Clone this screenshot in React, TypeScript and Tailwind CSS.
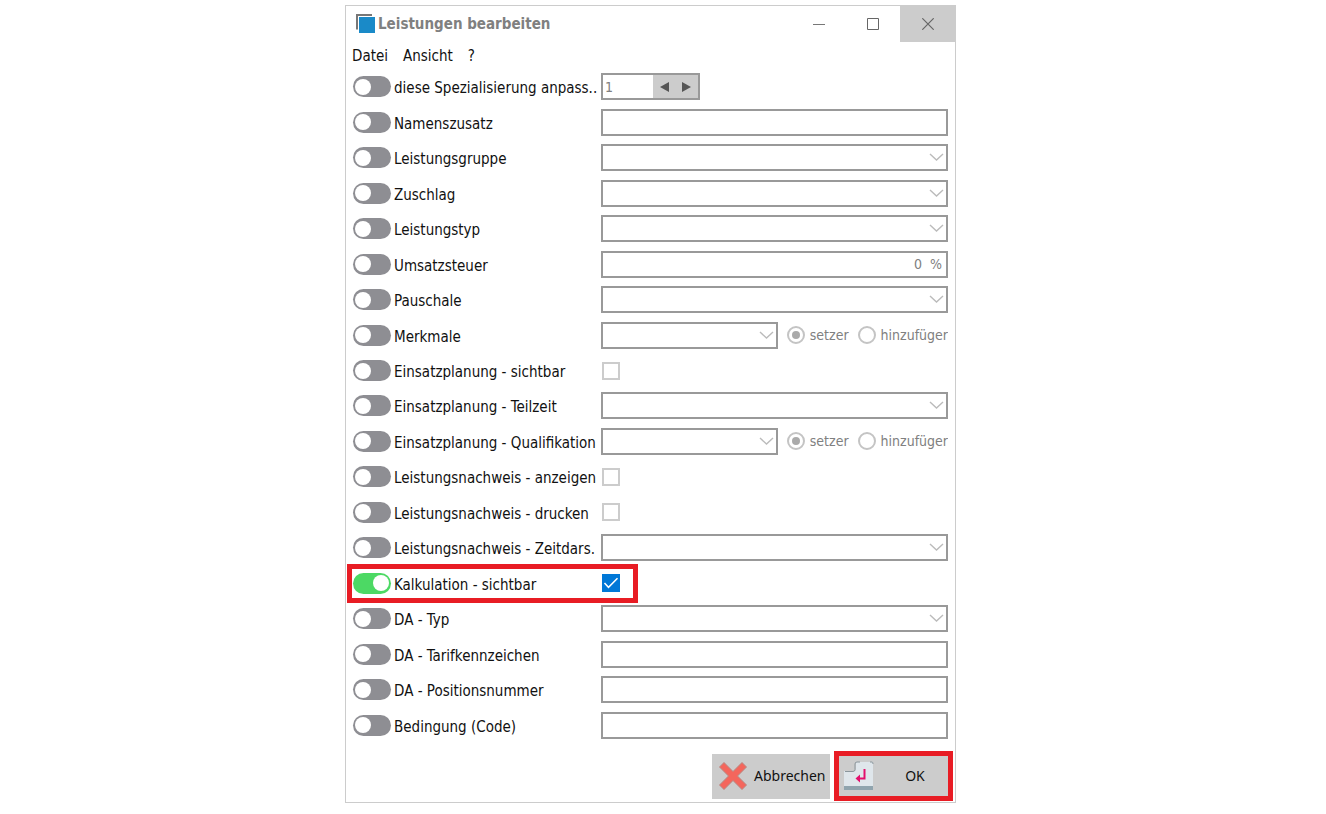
import React, { useState } from "react";

type FieldKind = "spinner" | "text" | "select" | "percent" | "selectWithMode" | "checkbox";

interface FieldRow {
  id: string;
  label: string;
  kind: FieldKind;
  active?: boolean;
}

const ROWS: FieldRow[] = [
  { id: "spezialisierung", label: "diese Spezialisierung anpass..", kind: "spinner" },
  { id: "namenszusatz", label: "Namenszusatz", kind: "text" },
  { id: "leistungsgruppe", label: "Leistungsgruppe", kind: "select" },
  { id: "zuschlag", label: "Zuschlag", kind: "select" },
  { id: "leistungstyp", label: "Leistungstyp", kind: "select" },
  { id: "umsatzsteuer", label: "Umsatzsteuer", kind: "percent" },
  { id: "pauschale", label: "Pauschale", kind: "select" },
  { id: "merkmale", label: "Merkmale", kind: "selectWithMode" },
  { id: "ep-sichtbar", label: "Einsatzplanung - sichtbar", kind: "checkbox" },
  { id: "ep-teilzeit", label: "Einsatzplanung - Teilzeit", kind: "select" },
  { id: "ep-qualifikation", label: "Einsatzplanung - Qualifikation", kind: "selectWithMode" },
  { id: "ln-anzeigen", label: "Leistungsnachweis - anzeigen", kind: "checkbox" },
  { id: "ln-drucken", label: "Leistungsnachweis - drucken", kind: "checkbox" },
  { id: "ln-zeitdars", label: "Leistungsnachweis - Zeitdars.", kind: "select" },
  { id: "kalkulation", label: "Kalkulation - sichtbar", kind: "checkbox", active: true },
  { id: "da-typ", label: "DA - Typ", kind: "select" },
  { id: "da-tarif", label: "DA - Tarifkennzeichen", kind: "text" },
  { id: "da-position", label: "DA - Positionsnummer", kind: "text" },
  { id: "bedingung", label: "Bedingung (Code)", kind: "text" },
];

const box = "h-[27px] w-full border-2 border-[#999] bg-white text-[#808080] outline-none";

interface FieldProps {
  id: string;
  label: string;
  enabled: boolean;
}

const SelectField = ({ id, label, enabled }: FieldProps) => (
  <div className="relative min-w-0 flex-1">
    <select id={id} aria-label={label} disabled={!enabled} className={`${box} block appearance-none opacity-100`}>
      <option value=""></option>
    </select>
    <svg
      className="pointer-events-none absolute top-[9px] right-[4px] h-[8px] w-[15px] text-[#bbb]"
      viewBox="0 0 15 8"
      fill="none"
      stroke="currentColor"
      strokeWidth="1.4"
    >
      <path d="M1 1l6.5 6L14 1" />
    </svg>
  </div>
);

const ModeRadio = ({ name, label, checked, enabled }: { name: string; label: string; checked?: boolean; enabled: boolean }) => (
  <label className="flex items-center gap-[5px] text-[#808080]">
    <input
      type="radio"
      name={name}
      defaultChecked={checked}
      disabled={!enabled}
      className="grid size-[18px] shrink-0 appearance-none place-items-center rounded-full border-2 border-[#c4c4c4] bg-white before:size-[8px] before:rounded-full checked:before:bg-[#aaa]"
    />
    {label}
  </label>
);

const CheckField = ({ id, label, enabled }: FieldProps) => (
  <span className="relative ml-px block size-[18px]">
    <input
      id={id}
      type="checkbox"
      aria-label={label}
      defaultChecked={enabled}
      disabled={!enabled}
      className="peer block size-[18px] appearance-none border-2 border-[#ccc] bg-white checked:border-[#0078d7] checked:bg-[#0078d7]"
    />
    <svg
      className="pointer-events-none absolute inset-0 hidden size-[18px] peer-checked:block"
      viewBox="0 0 18 18"
      fill="none"
      stroke="#fff"
      strokeWidth="1.5"
    >
      <path d="M2.5 9l4 4.3L15.5 4.2" />
    </svg>
  </span>
);

const SpinnerField = ({ id, label, enabled }: FieldProps) => (
  <div className="flex h-[27px] w-[99px] border-2 border-[#999] bg-[#ccc]">
    <input
      id={id}
      aria-label={label}
      defaultValue="1"
      disabled={!enabled}
      className="w-[50px] bg-white px-[2px] text-[#808080] outline-none"
    />
    <button type="button" aria-label="Vorheriger" className="grid flex-1 place-items-center">
      <svg className="h-[10px] w-[9px]" viewBox="0 0 9 10" fill="#555">
        <path d="M9 0v10L0 5z" />
      </svg>
    </button>
    <button type="button" aria-label="Nächster" className="grid flex-1 place-items-center">
      <svg className="h-[10px] w-[9px]" viewBox="0 0 9 10" fill="#555">
        <path d="M0 0v10l9-5z" />
      </svg>
    </button>
  </div>
);

const Field = ({ kind, ...props }: FieldProps & { kind: FieldKind }) => {
  const { id, label, enabled } = props;

  switch (kind) {
    case "spinner":
      return <SpinnerField {...props} />;
    case "select":
      return <SelectField {...props} />;
    case "checkbox":
      return <CheckField {...props} />;
    case "selectWithMode":
      return (
        <div className="flex min-w-0 flex-1 items-center gap-[9px] overflow-hidden">
          <SelectField {...props} />
          <ModeRadio name={`${id}-mode`} label="setzer" checked enabled={enabled} />
          <ModeRadio name={`${id}-mode`} label="hinzufüger" enabled={enabled} />
        </div>
      );
    case "percent":
      return (
        <input id={id} aria-label={label} defaultValue="0  %" disabled={!enabled} className={`${box} px-1 text-right`} />
      );
    default:
      return <input id={id} aria-label={label} disabled={!enabled} className={`${box} px-1`} />;
  }
};

const Row = ({ row }: { row: FieldRow }) => {
  const [enabled, setEnabled] = useState(!!row.active);

  return (
    <div className="relative grid grid-cols-[38px_204px_minmax(0,1fr)] items-center gap-x-[3px]">
      <input
        id={`${row.id}-switch`}
        type="checkbox"
        role="switch"
        checked={enabled}
        onChange={(e) => setEnabled(e.target.checked)}
        className="flex h-[21px] w-[38px] appearance-none items-center rounded-full bg-[#8e8e93] px-[2px] before:size-[16px] before:rounded-full before:bg-white checked:justify-end checked:bg-[#4cd964]"
      />
      <label htmlFor={`${row.id}-switch`} className="pt-[3px] text-[15px] whitespace-nowrap text-[#111]">
        {row.label}
      </label>
      <div className="flex items-center">
        <Field id={row.id} label={row.label} kind={row.kind} enabled={enabled} />
      </div>

      {/* Marker around the active row */}
      {row.active && (
        <div className="pointer-events-none absolute -inset-y-[2px] -left-[6px] w-[291px] border-[5px] border-[#e81c24]"></div>
      )}
    </div>
  );
};

const TitleBar = () => (
  <header className="flex h-[36px] items-center pl-[10px]">
    <svg className="h-[20px] w-[20px]" viewBox="0 0 20 20">
      <path d="M1 15.500V1h15" fill="none" stroke="#777" strokeWidth="2" />
      <rect x="3" y="3" width="16" height="16" fill="#1a8ac8" />
    </svg>
    <h1 className="ml-[2px] flex-1 text-[15px] font-bold text-[#808080]">Leistungen bearbeiten</h1>
    <button type="button" aria-label="Minimieren" className="grid h-full w-[54px] place-items-center">
      <svg className="size-[12px]" viewBox="0 0 12 12" stroke="#777">
        <path d="M0 6.500h12" />
      </svg>
    </button>
    <button type="button" aria-label="Maximieren" className="grid h-full w-[54px] place-items-center">
      <svg className="size-[12px]" viewBox="0 0 12 12" fill="none" stroke="#666">
        <path d="M.5.5h11v11H.5z" />
      </svg>
    </button>
    <button type="button" aria-label="Schließen" className="grid h-full w-[55px] place-items-center bg-[#ccc]">
      <svg className="size-[12px]" viewBox="0 0 12 12" stroke="#666" strokeWidth="1.2">
        <path d="M.3.3l11.400 11.400M11.700.3L.3 11.700" />
      </svg>
    </button>
  </header>
);

const Footer = () => (
  <footer className="flex items-center justify-end gap-1 pr-[2px] pb-px font-['Noto_Sans',sans-serif]">
    <button type="button" className="flex h-[45px] w-[118px] items-center bg-[#ccc] pl-[6px] text-[#111]">
      <svg className="size-[30px] shrink-0" viewBox="0 0 30 30">
        <path
          d="M6 1.500L15 10.500l9-9L28.500 6l-9 9 9 9-4.500 4.500-9-9-9 9L1.500 24l9-9-9-9z"
          fill="#f4665c"
          stroke="#b98680"
          strokeLinejoin="round"
        />
      </svg>
      <span className="ml-[6px]">Abbrechen</span>
    </button>
    <button
      type="button"
      className="flex h-[50px] w-[119px] items-center border-[5px] border-[#e81c24] bg-[#ccc] pl-[5px] text-[#111]"
    >
      <svg className="size-[30px] shrink-0" viewBox="0 0 30 30">
        <path d="M0 10h10q2 0 2-2V1h17v25H0z" fill="#dfe6eb" />
        <path d="M0 25h29v4H0z" fill="#90a4ae" />
        <path d="M1 10.500h8q2 0 2-2V3q0-2 2-2h3M26 1h2q1 0 1 2" fill="none" stroke="#8b969c" />
        <path d="M20.500 8v9.500H14" fill="none" stroke="#e3106d" strokeWidth="2" />
        <path d="M16 13.500v8L11.500 17.500z" fill="#e3106d" />
      </svg>
      <span className="flex-1 pl-[8px] text-center">OK</span>
    </button>
  </footer>
);

const App = () => {
  return (
    <div className="flex min-h-screen bg-white pt-[5px] pb-[11px] font-['DejaVu_Sans_Condensed','DejaVu_Sans',sans-serif] text-[14px] leading-[20px]">
      <main className="mr-[370px] ml-[345px] flex min-w-[580px] flex-1 flex-col border border-[#ccc]">
        <TitleBar />
        <nav className="flex h-[27px] items-center gap-[15px] pl-[6px] text-[15px] text-[#111]">
          <button type="button">Datei</button>
          <button type="button">Ansicht</button>
          <button type="button">?</button>
        </nav>
        <form className="grid flex-1 auto-rows-fr px-[7px] pb-[8px]">
          {ROWS.map((row) => (
            <Row key={row.id} row={row} />
          ))}
        </form>
        <Footer />
      </main>
    </div>
  );
};

export default App;
